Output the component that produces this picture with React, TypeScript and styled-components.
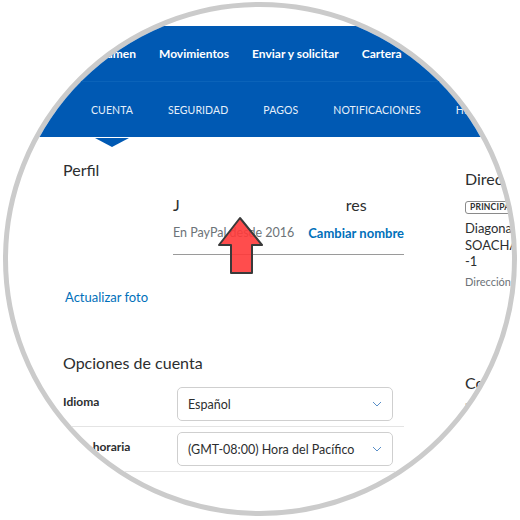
import React from "react";
import styled, { createGlobalStyle } from "styled-components";

const Global = createGlobalStyle`
  html, body { margin: 0; padding: 0; background: #ffffff; }
  body { font-family: "Lato", "Open Sans", sans-serif; width: 520px; height: 520px; overflow: hidden; }
`;

const BLUE = "#0059b3";

const Frame = styled.div`
  margin: 2px 0 0 3px;
  width: 514px;
  height: 514px;
  box-sizing: border-box;
  border: 5px solid #cbcbcb;
  border-radius: 50%;
  overflow: hidden;
  background: #fff;
  position: relative;
`;

const Page = styled.div`
  padding-top: 19px;
`;

const Header = styled.header`
  background: ${BLUE};
`;

const MainNav = styled.nav`
  height: 55px;
  display: flex;
  align-items: center;
  gap: 23px;
  padding-left: 79px;
  border-bottom: 1px solid #0b63b9;
`;

const MainItem = styled.span`
  color: #ffffff;
  font-weight: 700;
  font-size: 12px;
  white-space: nowrap;
`;

const SubNav = styled.nav`
  height: 55px;
  display: flex;
  align-items: center;
  gap: 35px;
  padding-left: 83px;
  position: relative;
`;

const SubItem = styled.span<{ $active?: boolean }>`
  position: relative;
  color: #e6f0fa;
  font-size: 10.5px;
  letter-spacing: 0.1px;
  white-space: nowrap;
  &::after {
    content: "";
    display: ${(p) => (p.$active ? "block" : "none")};
    position: absolute;
    left: 50%;
    top: 34px;
    margin-left: -17px;
    border-left: 17px solid transparent;
    border-right: 17px solid transparent;
    border-top: 9px solid ${BLUE};
  }
`;

const Body = styled.div`
  display: flex;
  padding-left: 55px;
  gap: 61px;
`;

const LeftCol = styled.div`
  width: 341px;
  flex-shrink: 0;
`;

const RightCol = styled.div`
  width: 200px;
  flex-shrink: 0;
`;

const SectionTitle = styled.h2<{ $mt: number }>`
  margin: ${(p) => p.$mt}px 0 0;
  font-weight: 400;
  font-size: 16px;
  line-height: 22px;
  color: #2c2e2f;
`;

const ProfileRow = styled.div`
  display: flex;
  margin-top: 14px;
`;

const PhotoSpace = styled.div`
  width: 110px;
  flex-shrink: 0;
`;

const NameBlock = styled.div`
  flex: 1;
  border-bottom: 1px solid #9a9a9a;
  padding-bottom: 12px;
`;

const Name = styled.div`
  font-size: 16px;
  line-height: 20px;
  color: #2c2e2f;
`;

const Hidden = styled.span`
  display: inline-block;
  width: 166px;
`;

const MetaLine = styled.div`
  margin-top: 9px;
  display: flex;
  justify-content: space-between;
  font-size: 12.5px;
  line-height: 18px;
`;

const Since = styled.span`
  color: #6c7378;
`;

const Link = styled.span<{ $bold?: boolean }>`
  color: #0070ba;
  font-weight: ${(p) => (p.$bold ? 700 : 400)};
  font-size: 13px;
`;

const UpdatePhoto = styled.div`
  margin-top: 33px;
  font-size: 13px;
  line-height: 18px;
  color: #0070ba;
  padding-left: 2px;
`;

const OptionRows = styled.div`
  margin-top: 8px;
`;

const OptionRow = styled.div`
  display: flex;
  align-items: center;
  padding: 5px 0;
  border-bottom: 1px solid #e4e4e4;
`;

const OptionLabel = styled.span`
  width: 114px;
  flex-shrink: 0;
  font-weight: 700;
  font-size: 12px;
  color: #2c2e2f;
  padding-bottom: 5px;
`;

const Select = styled.div`
  box-sizing: border-box;
  width: 216px;
  height: 34px;
  border: 1px solid #cfcfcf;
  border-radius: 5px;
  display: flex;
  align-items: center;
  justify-content: space-between;
  padding: 0 10px 0 10px;
  font-size: 12.5px;
  color: #2c2e2f;
`;

const Chevron = () => (
  <svg width="10" height="6" viewBox="0 0 10 6" fill="none">
    <path d="M1 1l4 4 4-4" stroke="#5a8fc8" strokeWidth="1" />
  </svg>
);

const Badge = styled.span`
  display: inline-block;
  margin-top: 11px;
  border: 1px solid #8a8a8a;
  border-radius: 3px;
  padding: 0 4px;
  font-size: 8.5px;
  line-height: 11px;
  font-weight: 700;
  color: #2c2e2f;
  letter-spacing: 0.2px;
`;

const Address = styled.div`
  margin-top: 6px;
  font-size: 13px;
  line-height: 16.5px;
  color: #2c2e2f;
`;

const SmallGray = styled.div<{ $mt: number }>`
  margin-top: ${(p) => p.$mt}px;
  font-size: 11px;
  line-height: 16px;
  color: #6c7378;
`;

const Arrow = styled.svg`
  position: absolute;
  left: 209px;
  top: 208px;
`;

export default function App() {
  return (
    <>
      <Global />
      <Frame>
        <Page>
          <Header>
            <MainNav>
              <MainItem>Resumen</MainItem>
              <MainItem>Movimientos</MainItem>
              <MainItem>Enviar y solicitar</MainItem>
              <MainItem>Cartera</MainItem>
            </MainNav>
            <SubNav>
              <SubItem $active>CUENTA</SubItem>
              <SubItem>SEGURIDAD</SubItem>
              <SubItem>PAGOS</SubItem>
              <SubItem>NOTIFICACIONES</SubItem>
              <SubItem>HERRAMIENTAS</SubItem>
            </SubNav>
          </Header>
          <Body>
            <LeftCol>
              <SectionTitle $mt={22}>Perfil</SectionTitle>
              <ProfileRow>
                <PhotoSpace />
                <NameBlock>
                  <Name>
                    J<Hidden />res
                  </Name>
                  <MetaLine>
                    <Since>En PayPal desde 2016</Since>
                    <Link $bold>Cambiar nombre</Link>
                  </MetaLine>
                </NameBlock>
              </ProfileRow>
              <UpdatePhoto>Actualizar foto</UpdatePhoto>
              <SectionTitle $mt={46}>Opciones de cuenta</SectionTitle>
              <OptionRows>
                <OptionRow>
                  <OptionLabel>Idioma</OptionLabel>
                  <Select>
                    <span>Español</span>
                    <Chevron />
                  </Select>
                </OptionRow>
                <OptionRow>
                  <OptionLabel>Zona horaria</OptionLabel>
                  <Select>
                    <span>(GMT-08:00) Hora del Pacífico</span>
                    <Chevron />
                  </Select>
                </OptionRow>
              </OptionRows>
            </LeftCol>
            <RightCol>
              <SectionTitle $mt={31}>Dirección</SectionTitle>
              <Badge>PRINCIPAL</Badge>
              <Address>
                Diagonal
                <br />
                SOACHA
                <br />
                -1
              </Address>
              <SmallGray $mt={4}>Dirección</SmallGray>
              <SectionTitle $mt={82}>Correo electrónico</SectionTitle>
              <SmallGray $mt={2}>·</SmallGray>
            </RightCol>
          </Body>
        </Page>
        <Arrow width="48" height="62" viewBox="0 0 48 62">
          <path
            d="M23 3 L45 30 L35 30 L35 58 L14 58 L14 30 L2 30 Z"
            fill="#ff3a3a"
            fillOpacity="0.9"
            stroke="#3a3a3a"
            strokeWidth="2"
            strokeLinejoin="round"
          />
        </Arrow>
      </Frame>
    </>
  );
}
